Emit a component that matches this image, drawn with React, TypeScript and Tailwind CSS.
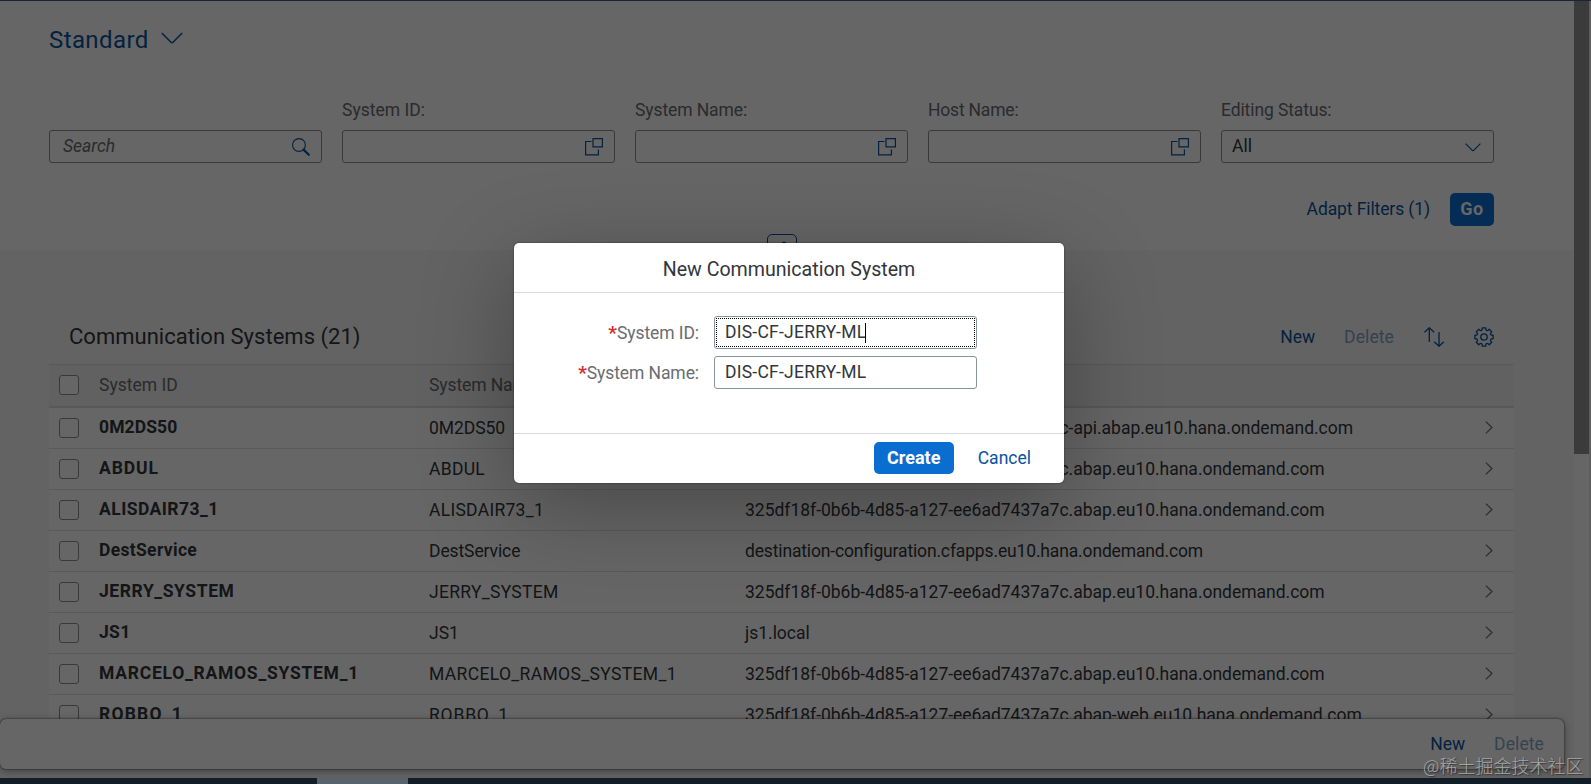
import React from "react";

const systems = [
  { id: "0M2DS50", host: "325df18f-0b6b-4d85-a127-ee6ad7437a7c-api.abap.eu10.hana.ondemand.com", idCls: "tracking-[0.1px]", nameCls: "tracking-[-0.05px]" },
  { id: "ABDUL", host: "325df18f-0b6b-4d85-a127-ee6ad7437a7c.abap.eu10.hana.ondemand.com", idCls: "tracking-[0.9px]", nameCls: "tracking-[0.3px]" },
  { id: "ALISDAIR73_1", host: "325df18f-0b6b-4d85-a127-ee6ad7437a7c.abap.eu10.hana.ondemand.com", idCls: "tracking-[0.45px]", nameCls: "tracking-[0.28px]" },
  { id: "DestService", host: "destination-configuration.cfapps.eu10.hana.ondemand.com", idCls: "tracking-[0.32px]", nameCls: "tracking-[-0.1px]" },
  { id: "JERRY_SYSTEM", host: "325df18f-0b6b-4d85-a127-ee6ad7437a7c.abap.eu10.hana.ondemand.com", idCls: "tracking-[0.58px]", nameCls: "tracking-[0.3px]" },
  { id: "JS1", host: "js1.local", idCls: "tracking-[0.3px]", nameCls: "" },
  { id: "MARCELO_RAMOS_SYSTEM_1", host: "325df18f-0b6b-4d85-a127-ee6ad7437a7c.abap.eu10.hana.ondemand.com", idCls: "tracking-[0.75px]", nameCls: "tracking-[0.35px]" },
  { id: "ROBBO_1", host: "325df18f-0b6b-4d85-a127-ee6ad7437a7c.abap-web.eu10.hana.ondemand.com", idCls: "tracking-[1.2px]", nameCls: "tracking-[0.8px]" },
];

// gear outline with eight teeth around a 20x20 box
const gearPath =
  Array.from({ length: 8 }, (_, i) => {
    const a = (i * Math.PI) / 4 - Math.PI / 2;
    const pt = (r: number, d: number) =>
      `${(10 + r * Math.cos(a + d)).toFixed(2)} ${(10 + r * Math.sin(a + d)).toFixed(2)}`;
    return `${i === 0 ? "M" : "L"}${pt(7.6, -0.25)}L${pt(9.3, -0.19)}L${pt(9.3, 0.19)}L${pt(7.6, 0.25)}Q${pt(6.7, 0.39)} ${pt(7.6, 0.535)}`;
  }).join("") + "Z";

const ValueHelpIcon = () => (
  <svg width="18" height="18" viewBox="0 0 18 18" fill="none" stroke="#0854a0" strokeWidth="1.2">
    <path d="M6.5 3.5H.6V16.9H13.4V11.5" />
    <path d="M8 .6H17.4V8.9H8Z" />
  </svg>
);

const ValueHelpField = ({ label, cls }: { label: string; cls: string }) => (
  <div className="w-[273px]">
    <p className={"h-6 leading-6 text-[#6a6d70] " + cls}>{label}</p>
    <div className="mt-2 flex h-[33px] items-center justify-end rounded-[3px] border border-[#89919a] bg-white pr-[11px]">
      <ValueHelpIcon />
    </div>
  </div>
);

const Checkbox = () => (
  <span className="ml-[10px] h-5 w-5 shrink-0 rounded-[3px] border border-[#89919a] bg-white" />
);

const FilterBar = () => (
  <div className="relative h-[249px] shrink-0 bg-white pt-[21px] pl-[49px]">
    <div className="flex h-9 items-center gap-3 text-[#0854a0]">
      <h1 className="text-2xl tracking-[0.4px]">Standard</h1>
      <svg width="22" height="12" viewBox="0 0 22 12" fill="none" stroke="#0854a0" strokeWidth="1.5" className="mb-1">
        <path d="M.8 1 10 10.2Q11 11.2 12 10.2L21.2 1" />
      </svg>
    </div>

    <div className="mt-10 flex w-[1445px] items-end justify-between">
      <div className="flex h-[33px] w-[273px] items-center justify-between rounded-[3px] border border-[#89919a] pr-[11px] pl-[13px]">
        <span className="pb-px text-[#6a6d70] italic">Search</span>
        <svg width="18" height="18" viewBox="0 0 18 18" fill="none" stroke="#0854a0">
          <circle cx="7" cy="7" r="6.4" strokeWidth="1.1" />
          <path d="M11.6 11.6 16.8 16.8" strokeWidth="2.2" strokeLinecap="round" />
        </svg>
      </div>
      <ValueHelpField label="System ID:" cls="" />
      <ValueHelpField label="System Name:" cls="tracking-[-0.1px]" />
      <ValueHelpField label="Host Name:" cls="tracking-[-0.2px]" />
      <div className="w-[273px]">
        <p className="h-6 leading-6 tracking-[-0.1px] text-[#6a6d70]">Editing Status:</p>
        <div className="mt-2 flex h-[33px] items-center justify-between rounded-[3px] border border-[#89919a] pr-3 pl-[10px]">
          <span className="pb-px text-[#32363a]">All</span>
          <svg width="16" height="9" viewBox="0 0 16 9" fill="none" stroke="#0854a0" strokeWidth="1.2" className="mt-[2px]">
            <path d="M.6.6 7.3 7.4Q8 8.1 8.7 7.4L15.4.6" />
          </svg>
        </div>
      </div>
    </div>

    <div className="mt-[30px] flex h-[33px] w-[1445px] items-center justify-end gap-5">
      <button className="pb-px tracking-[-0.1px] text-[#0854a0]">Adapt Filters (1)</button>
      <button className="h-[33px] w-11 rounded-[5px] bg-[#0a6ed1] pb-[2px] text-[18px] font-bold tracking-[0.6px] text-white">Go</button>
    </div>

    <div className="absolute top-[233px] left-[767px] flex h-[30px] w-[30px] justify-center rounded-[5px] border border-[#0854a0] bg-white pt-[6px] pl-1">
      <svg width="16" height="9" viewBox="0 0 16 9" fill="none" stroke="#0854a0" strokeWidth="1.5">
        <path d="M1 8 7 1.6Q8 .8 9 1.6L15 8" />
      </svg>
    </div>
  </div>
);

const SystemTable = () => (
  <div className="mt-[59px] ml-[49px] w-[1465px] text-[#32363a]">
    <div className="flex h-[55px] items-center pr-5 pl-5">
      <h2 className="flex-1 text-[22px] tracking-[0.02px]">Communication Systems (21)</h2>
      <button className="pt-px text-[#0854a0]">New</button>
      <button className="ml-[29px] pt-px tracking-[0.1px] text-[#0854a0] opacity-50">Delete</button>
      <svg width="20" height="20" viewBox="0 0 20 20" fill="none" stroke="#0854a0" strokeWidth="1.3" className="ml-[30px]">
        <path d="M5.3 15V1M.5 5.3 5.3.8 10.1 5.3M15 5V19M10.2 14.7 15 19.2 19.8 14.7" />
      </svg>
      <svg width="20" height="20" viewBox="0 0 20 20" fill="none" stroke="#0854a0" strokeWidth="1.3" strokeLinejoin="round" className="ml-[30px]">
        <path d={gearPath} />
        <circle cx="10" cy="10" r="3.2" />
      </svg>
    </div>

    <div className="flex h-[44px] items-center border-t border-b-2 border-t-[#dcdcdc] border-b-[#dcdcdc] bg-[#f2f2f2] pb-px text-[#6a6d70]">
      <Checkbox />
      <span className="ml-5 w-[330px]">System ID</span>
      <span className="tracking-[-0.1px]">System Name</span>
    </div>

    {systems.map((s) => (
      <div key={s.id} className="flex h-[41px] items-center border-b border-[#e0e0e0] bg-white">
        <Checkbox />
        <span className={"ml-5 w-[330px] pb-[2px] font-bold " + s.idCls}>{s.id}</span>
        <span className={"w-[316px] " + s.nameCls}>{s.id}</span>
        <span className={s.host.startsWith("dest") ? "flex-1 tracking-[-0.15px]" : "flex-1 tracking-[-0.01px]"}>{s.host}</span>
        <svg width="8" height="13" viewBox="0 0 8 13" fill="none" stroke="#6a6d70" strokeWidth="1.2" className="mr-[21px] mb-[2px]">
          <path d="M.8.6 7 6.5.8 12.4" />
        </svg>
      </div>
    ))}
  </div>
);

const DialogField = ({ label, value, focused }: { label: string; value: string; focused?: boolean }) => (
  <div className="flex h-[33px] items-center">
    <p className="w-[185px] pt-px text-right tracking-[-0.08px] text-[#6a6d70]">
      <span className="text-[19px] leading-5 font-bold text-[#d92f2f]">*</span>
      {label}
    </p>
    <div className="relative ml-[15px] flex h-[33px] w-[263px] items-center rounded-[3px] border border-[#89919a] pl-[10px] text-[#32363a]">
      <span className="pb-px tracking-[0.24px]">{value}</span>
      {focused && <span className="-ml-px h-5 w-px bg-black" />}
      {focused && <span className="absolute inset-[1px] border border-dotted border-black" />}
    </div>
  </div>
);

const NewSystemDialog = () => (
  <div className="absolute top-[243px] left-[514px] flex h-[240px] w-[550px] flex-col rounded-[5px] bg-white shadow-[0_0_2px_rgba(0,0,0,0.5),0_23px_94px_rgba(0,0,0,0.3)]">
    <div className="flex h-[50px] items-center justify-center border-b border-[#d9d9d9] pt-1 text-[19.6px] text-[#32363a]">
      New Communication System
    </div>
    <div className="flex flex-1 flex-col gap-[7px] pt-[23px]">
      <DialogField label="System ID:" value="DIS-CF-JERRY-ML" focused />
      <DialogField label="System Name:" value="DIS-CF-JERRY-ML" />
    </div>
    <div className="flex h-[50px] items-center justify-end border-t border-[#d9d9d9] pr-[33px] pb-px">
      <button className="h-8 w-20 rounded-[5px] bg-[#0a6ed1] pb-px text-[18px] font-bold text-white">Create</button>
      <button className="ml-6 text-[#0854a0]">Cancel</button>
    </div>
  </div>
);

const App = () => {
  return (
    <div className="relative h-[784px] w-[1591px] overflow-hidden bg-[#f7f7f7] font-['Roboto',sans-serif] text-[17.5px]">
      <div className="flex h-[778px] overflow-hidden">
        <div className="flex w-[1574px] flex-col pt-px">
          <FilterBar />
          <SystemTable />
        </div>
        {/* scrollbar */}
        <div className="w-[15px] bg-white">
          <div className="h-[454px] bg-[#949494]" />
        </div>
        <div className="w-[2px] bg-[#ececec]" />
      </div>

      {/* floating footer */}
      <div className="absolute top-[719px] left-0 flex h-[50px] w-[1564px] items-center justify-end rounded-[6px] bg-white pr-5 text-[#0854a0] shadow-[0_0_2px_rgba(0,0,0,0.8),0_2px_8px_rgba(0,0,0,0.35)]">
        <button>New</button>
        <button className="ml-[29px] tracking-[0.1px] opacity-50">Delete</button>
      </div>

      {/* modal backdrop */}
      <div className="absolute inset-0 bg-black/60" />
      <NewSystemDialog />

      <div className="absolute top-0 left-0 h-px w-full bg-[#1b2436]" />
      <div className="absolute bottom-0 left-0 flex h-[6px] w-full bg-[#111e28]">
        <div className="ml-[317px] w-[91px] bg-[#58636e]" />
      </div>
      <div className="absolute top-[753px] left-[1423px] font-['Noto_Sans_CJK_SC',sans-serif] text-[18px] leading-6 font-light whitespace-nowrap text-[#a6a6a6] [text-shadow:1px_1px_1px_#333]">
        @稀土掘金技术社区
      </div>
    </div>
  );
};

export default App;
